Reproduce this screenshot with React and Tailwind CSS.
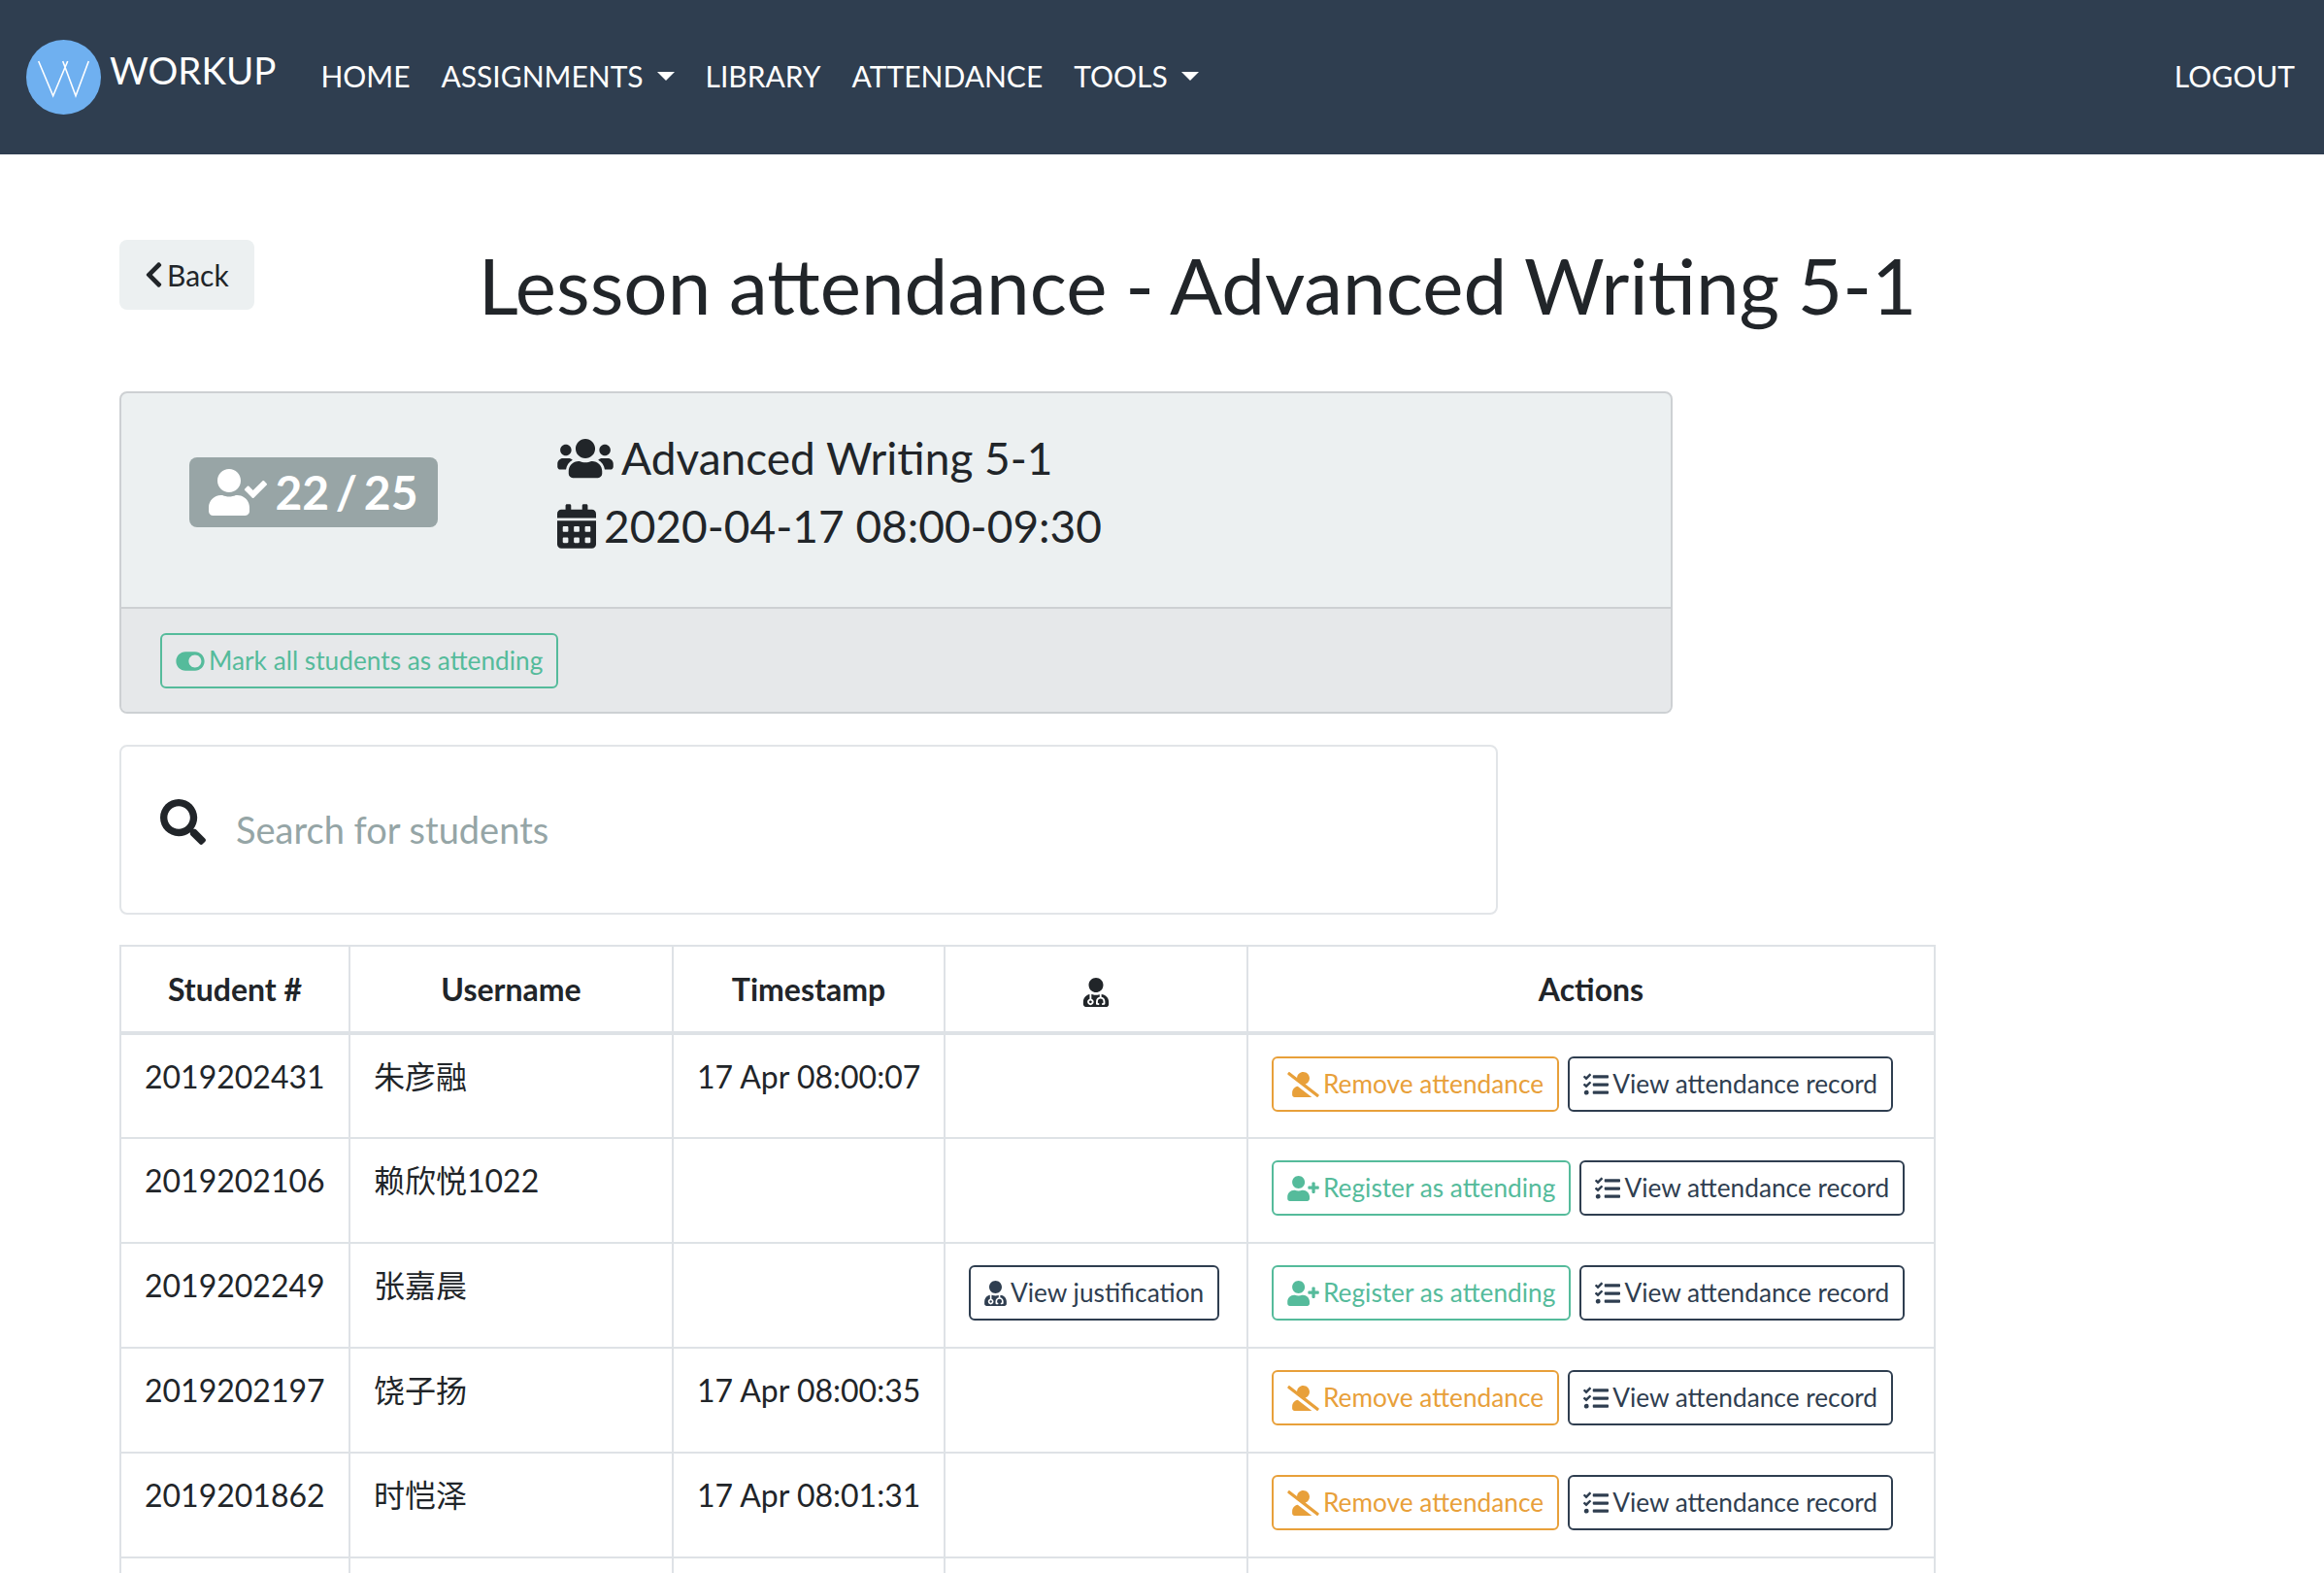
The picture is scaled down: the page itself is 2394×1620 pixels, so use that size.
import React from 'react';
import { FaUserCheck, FaUsers, FaCalendarAlt, FaToggleOn, FaUserSlash, FaUserPlus, FaTasks, FaUserMd, FaChevronLeft, FaSearch } from 'react-icons/fa';

const Logo = () => (
  <svg width="77" height="77" viewBox="0 0 77 77" className="shrink-0">
    <circle cx="38.5" cy="38.5" r="38.5" fill="#6fb0f0" />
    <path d="M12.7 22 L27.7 57.7 L42.7 22 M37.7 22 L51 57.7 L64.3 22" fill="none" stroke="#fff" strokeWidth="1.6" />
  </svg>
);

const Caret = () => <span className="ml-[14px] w-0 h-0 border-x-[9px] border-x-transparent border-t-[9px] border-t-white inline-block" />;

const NavLink = ({ children, caret }) => (
  <a className="flex items-center text-[30px] leading-[45px] text-white uppercase">{children}{caret && <Caret />}</a>
);

const Btn = ({ tone, icon, children }) => {
  const tones = {
    green: 'border-[#55bb9b] text-[#55bb9b]',
    orange: 'border-[#e8a03a] text-[#e8a03a]',
    dark: 'border-[#2f3e50] text-[#2f3e50]',
  };
  return (
    <button className={`inline-flex items-center gap-[4px] h-[57px] px-[14px] border-2 rounded-[6px] text-[26.25px] leading-[39px] whitespace-nowrap ${tones[tone]}`}>
      {icon}{children}
    </button>
  );
};

const rows = [
  ['2019202431', '朱彦融', '17 Apr 08:00:07', false, true],
  ['2019202106', '赖欣悦1022', '', false, false],
  ['2019202249', '张嘉晨', '', true, false],
  ['2019202197', '饶子扬', '17 Apr 08:00:35', false, true],
  ['2019201862', '时恺泽', '17 Apr 08:01:31', false, true],
];

const th = 'border-2 border-[#dee2e6] border-b-4 h-[90px] p-0 text-center font-bold text-[32px] leading-[48px] text-[#212529]';
const td = 'border-2 border-[#dee2e6] px-[24px] pt-[19px] pb-[24px] align-top text-[32px] leading-[48px] text-[#212529] h-[108px]';

export default function App() {
  return (
    <div className="h-[1620px] overflow-hidden bg-white font-['Lato','Noto_Sans_CJK_SC',sans-serif] text-[#212529]">
      <nav className="h-[159px] bg-[#2f3e50] flex items-center pl-[27px] pr-[30px]">
        <Logo />
        <span className="ml-[9px] mb-[15px] text-[38.5px] leading-[58px] text-white">WORKUP</span>
        <div className="ml-[46px] flex items-center gap-[32px] mb-[3px]">
          <NavLink>Home</NavLink>
          <NavLink caret>Assignments</NavLink>
          <NavLink>Library</NavLink>
          <NavLink>Attendance</NavLink>
          <NavLink caret>Tools</NavLink>
        </div>
        <div className="ml-auto mb-[3px]"><NavLink>Logout</NavLink></div>
      </nav>

      <main className="pl-[123px] pt-[88px]">
        <div className="flex items-start">
          <button className="flex items-center gap-[4px] h-[72px] px-[26px] bg-[#ecf0f1] rounded-[8px] text-[30px] leading-[45px]">
            <FaChevronLeft className="w-[19px] h-[30px]" />Back
          </button>
          <h1 className="ml-[231px] -mt-[2px] text-[80px] leading-[96px] font-normal whitespace-nowrap [word-spacing:-1.8px]">Lesson attendance - Advanced Writing 5-1</h1>
        </div>

        <section className="mt-[62px] w-[1600px] h-[332px] border-2 border-[#cdd0d3] rounded-[8px] bg-[#ecf0f1] overflow-hidden flex flex-col">
          <div className="h-[220px] flex items-start shrink-0">
            <div className="ml-[70px] mt-[66px] w-[256px] h-[72px] rounded-[8px] bg-[#98a5a6] text-white flex items-center justify-center gap-[8px] text-[48px] font-bold [word-spacing:-5px]">
              <FaUserCheck className="w-[60px] h-[48px]" />22 / 25
            </div>
            <div className="ml-[123px] mt-[32px] text-[46px] leading-[70px]">
              <div className="flex items-center gap-[8px]"><FaUsers className="w-[58px] h-[46px]" />Advanced Writing 5-1</div>
              <div className="flex items-center gap-[8px]"><FaCalendarAlt className="w-[40px] h-[46px]" />2020-04-17 08:00-09:30</div>
            </div>
          </div>
          <div className="flex-1 border-t-2 border-[#cdd0d3] bg-[#e6e8ea] pl-[40px] pt-[25px]">
            <Btn tone="green" icon={<FaToggleOn className="w-[30px] h-[26px]" />}>Mark all students as attending</Btn>
          </div>
        </section>

        <div className="mt-[32px] w-[1420px] h-[175px] border-2 border-[#e2e5e8] rounded-[8px] flex items-center pl-[40px]">
          <FaSearch size={47} className="mb-[16px]" />
          <input
            className="ml-[31px] flex-1 bg-transparent outline-none text-[38px] leading-[57px] placeholder:text-[#95a5a6]"
            placeholder="Search for students"
          />
        </div>

        <table className="mt-[31px] w-[1869px] table-fixed border-collapse">
          <colgroup>
            <col className="w-[236px]" />
            <col className="w-[333px]" />
            <col className="w-[280px]" />
            <col className="w-[312px]" />
            <col className="w-[708px]" />
          </colgroup>
          <thead>
            <tr>
              <th className={th}>Student #</th>
              <th className={th}>Username</th>
              <th className={th}>Timestamp</th>
              <th className={th}><FaUserMd size={30} className="inline-block" /></th>
              <th className={th}>Actions</th>
            </tr>
          </thead>
          <tbody>
            {rows.map((r) => (
              <tr key={r[0]}>
                <td className={td}>{r[0]}</td>
                <td className={td}>{r[1]}</td>
                <td className={td + ' whitespace-nowrap'}>{r[2]}</td>
                <td className={td + ' !pt-[22px]'}>
                  {r[3] && <Btn tone="dark" icon={<FaUserMd className="w-[23px] h-[26px]" />}>View justification</Btn>}
                </td>
                <td className={td + ' !pt-[22px]'}>
                  <div className="flex gap-[9px]">
                    {r[4]
                      ? <Btn tone="orange" icon={<FaUserSlash className="w-[33px] h-[26px]" />}>Remove attendance</Btn>
                      : <Btn tone="green" icon={<FaUserPlus className="w-[33px] h-[26px]" />}>Register as attending</Btn>}
                    <Btn tone="dark" icon={<FaTasks className="w-[26px] h-[26px]" />}>View attendance record</Btn>
                  </div>
                </td>
              </tr>
            ))}
            <tr>
              <td className={td}></td><td className={td}></td><td className={td}></td><td className={td}></td><td className={td}></td>
            </tr>
          </tbody>
        </table>
      </main>
    </div>
  );
}
